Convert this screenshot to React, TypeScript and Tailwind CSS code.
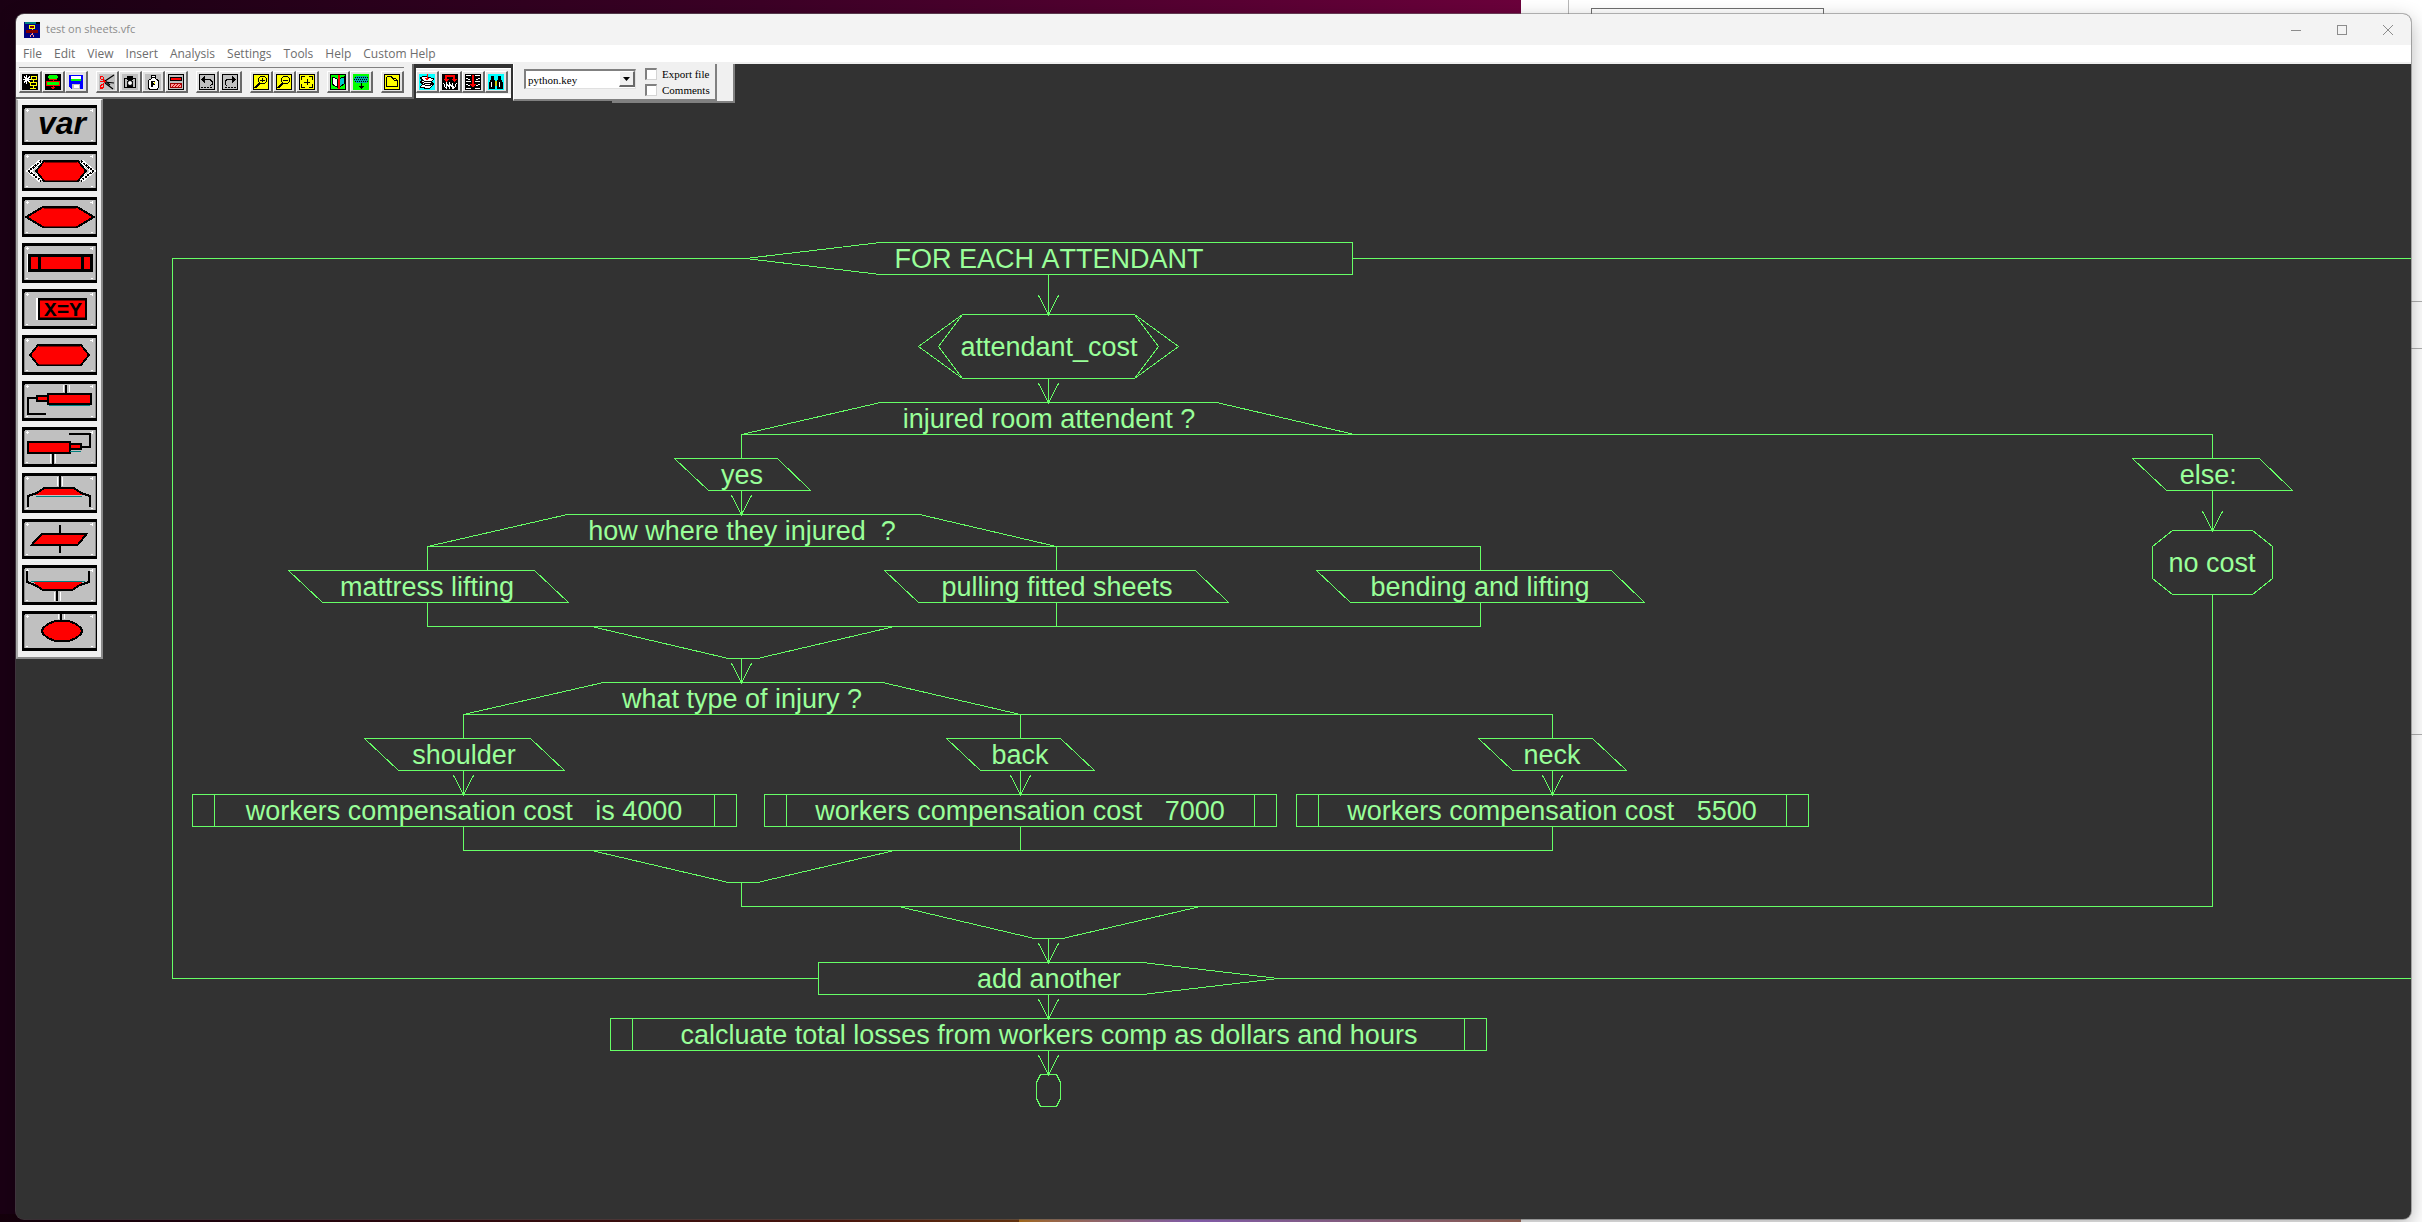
import type { ReactNode } from "react";

/* ---------- toolbar icons (16 x 16 pixel art) ---------- */

function Icon({ bg, children }: { bg: string; children: ReactNode }) {
  return (
    <svg viewBox="0 0 16 16" className="h-4 w-4" shapeRendering="crispEdges" fill="none" stroke="#000" strokeWidth="1" aria-hidden="true">
      <rect x="0" y="0" width="16" height="16" fill={bg} stroke="none" />
      {children}
    </svg>
  );
}

const magnifier = (
  <>
    <rect x="0.5" y="0.5" width="15" height="15" />
    <path d="M7.5 2.5h4l2 2v3l-2 2h-4l-2-2v-3z" strokeWidth="1" />
    <path d="M6 9l-4 5M7 9l-4 5" strokeWidth="1.5" />
  </>
);

const icons: Record<string, ReactNode> = {
  "New flowchart": (
    <Icon bg="#000">
      <path d="M4.500 1v9M1 5.500h8M2 2.500l6 6M8 2.500l-6 6" stroke="#fff" />
      <path d="M9 2.500h5v3h-5zM8 8.500h6v3H9zM11.500 5v3M11.500 12v2M8 14.500h6" stroke="#ff0" />
    </Icon>
  ),
  Open: (
    <Icon bg="#000">
      <path d="M4 1h8v1h1v2h-1v1H4V4H3V2h1z" fill="#0f0" stroke="none" />
      <rect x="1.500" y="7.500" width="13" height="4" fill="#0f0" stroke="#f00" />
      <path d="M4 5.500h8M8 5v2M8 11v4M6 13.500h4M7 14.500h2" stroke="#f00" />
    </Icon>
  ),
  Save: (
    <Icon bg="#e6e6e6">
      <path d="M1 1h14v14H3l-2-2z" fill="#00f" stroke="none" />
      <rect x="3" y="2" width="10" height="3" fill="#fff" stroke="none" />
      <rect x="3" y="5" width="10" height="2" fill="#0f0" stroke="none" />
      <rect x="4" y="10" width="8" height="5" fill="#c0c0c0" stroke="none" />
      <rect x="6" y="11" width="5" height="3" fill="#fff" stroke="none" />
    </Icon>
  ),
  Cut: (
    <Icon bg="#c0c0c0">
      <path d="M6 7l9-6M6 8l9 1M6 9l8 6M5 6l6 5" strokeWidth="1.200" shapeRendering="auto" />
      <path d="M1.500 2.500h2l1 1v2h-2l-1-1zM1.500 12.500l1-2h2v2l-1 1.500h-2zM4 5l2 2.500-2 3M1 7.500h5" stroke="#f00" strokeWidth="1.200" />
    </Icon>
  ),
  Copy: (
    <Icon bg="#c0c0c0">
      <path d="M2 4h3V2h6v2h3v10H2z" fill="#000" stroke="none" />
      <rect x="3" y="5" width="2" height="8" fill="#c0c0c0" stroke="none" />
      <rect x="11" y="5" width="2" height="8" fill="#c0c0c0" stroke="none" />
      <path d="M6 4h4v2H6z" fill="#000" stroke="none" />
      <path d="M5 6h1v1H5zM10 6h1v1h-1z" fill="#c0c0c0" stroke="none" />
      <circle cx="8" cy="9" r="2.500" fill="#fff" stroke="#000" shapeRendering="auto" />
    </Icon>
  ),
  Paste: (
    <Icon bg="#c0c0c0">
      <path d="M6.500 1.500h4v3l2.500 2v7.500l-1 1.500H5l-1.500-1.500V6.500l3-2z" fill="#fff" />
      <path d="M6 3.500h5" />
      <path d="M7 7.500h2.500v2.500H7zM7 7v6" strokeWidth="1.200" />
      <path d="M9 8v2" stroke="#ff0" />
    </Icon>
  ),
  Delete: (
    <Icon bg="#000">
      <rect x="1" y="1" width="14" height="14" fill="#c0c0c0" stroke="none" />
      <rect x="2.500" y="3.500" width="11" height="3" fill="#f00" />
      <rect x="2.500" y="9.500" width="11" height="4" fill="#f99" stroke="#900" />
      <path d="M4 13l3-3M7 13l3-3M10 13l3-3" stroke="#c00" />
    </Icon>
  ),
  Undo: (
    <Icon bg="#c0c0c0">
      <rect x="0.500" y="0.500" width="15" height="15" />
      <path d="M3 5.500h8l2 2v3l-2 1" />
      <path d="M6 2v7L2 5.500z" fill="#000" stroke="none" />
      <path d="M2 13.500h11" strokeDasharray="2 1" />
    </Icon>
  ),
  Redo: (
    <Icon bg="#c0c0c0">
      <rect x="0.500" y="0.500" width="15" height="15" />
      <path d="M13 5.500H5l-2 2v3l2 1" />
      <path d="M10 2v7l4-3.500z" fill="#000" stroke="none" />
      <path d="M3 13.500h11" strokeDasharray="2 1" />
    </Icon>
  ),
  "Zoom in": (
    <Icon bg="#ff0">
      {magnifier}
      <path d="M7 6h5M9.500 4v4" />
    </Icon>
  ),
  "Zoom out": (
    <Icon bg="#ff0">
      {magnifier}
      <path d="M7 6h5" />
    </Icon>
  ),
  "Fit to window": (
    <Icon bg="#ff0">
      <rect x="0.500" y="0.500" width="15" height="15" />
      <path d="M2.500 6V2.500H6M10 2.500h3.500V6M13.500 10v3.500H10M6 13.500H2.500V10M8 5v6M5 8h6" />
    </Icon>
  ),
  Compare: (
    <Icon bg="#0f0">
      <rect x="0.500" y="0.500" width="15" height="15" />
      <path d="M2 3l3 1 2 1v8l-2-1-3-2z" fill="#fff" />
      <path d="M14 3l-3 1-2 1v8l2-1 3-2z" fill="#0cc" />
      <path d="M9 1v14" stroke="#f00" strokeWidth="2" />
    </Icon>
  ),
  Filter: (
    <Icon bg="#0f0">
      <path d="M3 2h10l2 2v3l-2 2H3L1 7V4z" fill="#0aa" stroke="none" />
      <path d="M2 3.500h13M2 7.500h13" strokeDasharray="1 1" />
      <path d="M1 5.500h14" strokeDasharray="1 1" />
      <path d="M8 9v6M5.500 12.500h5M6.500 13.500h3" />
    </Icon>
  ),
  Folder: (
    <Icon bg="#ff0">
      <rect x="0.500" y="0.500" width="15" height="15" />
      <path d="M2.500 12.500v-9l1-1h4l1 2h3l2 2v6zM8 4.500l3 2h2" />
    </Icon>
  ),
  Collapse: (
    <Icon bg="#0ff">
      <path d="M1 4l4-2 10 3-3 3 3 2-5 5-9-2 3-3-3-2 3-2z" fill="#fff" />
      <path d="M2 6l6 2 5-1M3 10l6 2 5-2M2 8l6 2 6-1" />
      <path d="M8 0v6M6 4h4M7 5h2" stroke="#f00" />
    </Icon>
  ),
  "Merge down": (
    <Icon bg="#000">
      <path d="M3 1h2v4h2L4 8 1 5h2zM11 1h2v4h2l-3 3-3-3h2zM3 1h10v2H3z" fill="#f00" stroke="none" />
      <path d="M1.500 9l2 5M4.500 15V9l3 5V9l3 5V9l1 6M14.500 9l-2 5" stroke="#fff" />
    </Icon>
  ),
  "Insert down": (
    <Icon bg="#000">
      <path d="M1 1.500h5M10 1.500h5M1 4.500l4 1M15 4.500l-4 1M1 7.500h5M10 7.500h5M1 10.500l4 1M15 10.500l-4 1M1 14.500h5M10 14.500h5" stroke="#fff" />
      <path d="M7 1h2v9h2l-3 4-3-4h2z" fill="#f00" stroke="none" />
    </Icon>
  ),
  Find: (
    <Icon bg="#0ff">
      <path d="M3 2h3v3l1 2v8H1V9l2-4zM10 2h3v3l2 4v6H9V7l1-2z" fill="#000" stroke="none" />
      <path d="M7 7h2v5H7z" fill="#cc0" stroke="none" />
      <path d="M3.500 8v5M11.500 8v5" stroke="#fff" />
    </Icon>
  ),
};

const mainGroups = [
  ["New flowchart", "Open", "Save"],
  ["Cut", "Copy", "Paste", "Delete"],
  ["Undo", "Redo"],
  ["Zoom in", "Zoom out", "Fit to window"],
  ["Compare", "Filter"],
  ["Folder"],
];
const viewGroup = ["Collapse", "Merge down", "Insert down", "Find"];

function ToolButton({ name }: { name: string }) {
  return (
    <button
      type="button"
      aria-label={name}
      className="flex h-[22px] w-[23px] items-center justify-center border-t border-r-2 border-b-2 border-l border-t-white border-r-[#696969] border-b-[#696969] border-l-white bg-[#e3e3e3]"
    >
      {icons[name]}
    </button>
  );
}

/* ---------- shape palette (75 x 40 drawings with a 3px frame) ---------- */

const RED = "#ff0000";
const TEAL = "#008080";

const palette: { name: string; art: ReactNode }[] = [
  {
    name: "Variable",
    art: (
      <text x="40" y="29" textAnchor="middle" fill="#000" stroke="none" className="font-['Liberation_Sans'] text-[32px] font-bold italic">
        var
      </text>
    ),
  },
  {
    name: "Procedure header",
    art: (
      <>
        <path d="M19 10L7 20l12 10M15 20l8-10M15 20l8 10M59 10l12 10-12 10M63 20l-8-10M63 20l-8 10" stroke="#fff" strokeWidth="4" />
        <path d="M19 10L7 20l12 10M59 10l12 10-12 10" strokeWidth="2" strokeDasharray="2 1" />
        <path d="M22 10h34l8 10-8 10H22l-8-10z" fill={RED} />
        <path d="M23 11.500h32M23 29h32" stroke="#800000" strokeWidth="1" />
      </>
    ),
  },
  {
    name: "Decision",
    art: (
      <>
        <path d="M21 10h34l17 10-17 10H21L4 20z" fill={RED} />
        <path d="M22 11.500h32M22 29h32" stroke="#800000" strokeWidth="1" />
      </>
    ),
  },
  {
    name: "Process",
    art: (
      <>
        <path d="M6 29V11" stroke="#fff" />
        <rect x="7.500" y="12.500" width="62" height="15" fill={RED} strokeWidth="3" />
        <path d="M17.500 12v16M60 12v16" strokeWidth="3" />
      </>
    ),
  },
  {
    name: "Assignment",
    art: (
      <>
        <path d="M15.500 31V9" stroke="#fff" strokeWidth="3" />
        <rect x="17" y="10" width="47" height="20" fill={RED} />
        <path d="M18 28.500h45M18 11.500h45" stroke="#800000" strokeWidth="1" />
        <text x="41" y="27" textAnchor="middle" fill="#000" stroke="none" className="font-['Liberation_Mono'] text-[21px] font-bold">
          X=Y
        </text>
      </>
    ),
  },
  {
    name: "Terminal",
    art: (
      <>
        <path d="M16 10h43l8 10-8 10H16L8 20z" fill={RED} />
        <path d="M17 11.500h41M17 29h41" stroke="#800000" strokeWidth="1" />
      </>
    ),
  },
  {
    name: "Loop start",
    art: (
      <>
        <path d="M41.500 4v7M47 4v7" stroke="#fff" strokeWidth="1" />
        <path d="M44 4v8M15 17H6v16H24" strokeWidth="2" />
        <rect x="15" y="15" width="12" height="5" fill={RED} />
        <rect x="25.500" y="12.500" width="43" height="10" fill={RED} />
        <path d="M27 24.500h41" stroke={TEAL} strokeWidth="1" />
      </>
    ),
  },
  {
    name: "Loop end",
    art: (
      <>
        <path d="M28 27v9M33 27v9" stroke="#fff" strokeWidth="1" />
        <path d="M31 26v11M60 20h8V7H47" />
        <rect x="47" y="17" width="12" height="5" fill={RED} />
        <rect x="6" y="15" width="42" height="11" fill={RED} />
        <path d="M48 24.500h11" stroke={TEAL} strokeWidth="1" />
      </>
    ),
  },
  {
    name: "Branch",
    art: (
      <>
        <path d="M35.500 4v9M40.500 4v9" stroke="#fff" strokeWidth="1" />
        <path d="M22 15h30l10 5v2H14v-2z" fill={RED} stroke="none" />
        <path d="M38 3v12M6 34V23l9-3 7-5h30l7 5 9 3v11" />
        <path d="M14 23.500h46" stroke={TEAL} strokeWidth="1" />
      </>
    ),
  },
  {
    name: "Case",
    art: (
      <>
        <path d="M38 6v8M38 26v8" />
        <path d="M20 14.500h45l-9 11H10z" fill={RED} />
      </>
    ),
  },
  {
    name: "Branch end",
    art: (
      <>
        <path d="M32.500 27v9M38 27v9" stroke="#fff" strokeWidth="1" />
        <path d="M11 17h50l-10 7H20z" fill={RED} stroke="none" />
        <path d="M5 6v11l8 3 7 4.500h31l7-4.500 9-3V6M35 25v11" />
        <path d="M9 16.500h54" stroke={TEAL} strokeWidth="1" />
      </>
    ),
  },
  {
    name: "End",
    art: (
      <>
        <path d="M36 3v5M42 3v5" stroke="#fff" strokeWidth="1" />
        <path d="M39 2v8" />
        <path d="M33 10h14l7 3 5 4 1 3-1 3-5 4-7 3H33l-7-3-5-4-1-3 1-3 5-4z" fill={RED} />
      </>
    ),
  },
];

function Palette() {
  return (
    <div className="relative flex w-[87px] flex-col gap-1.5 self-start border-t border-r-2 border-b-2 border-l-2 border-t-white border-r-[#8a8a8a] border-b-[#8a8a8a] border-l-[#a8a8a8] bg-[#f0f0f0] pt-[5px] pb-1.5 pl-1">
      {palette.map((p) => (
        <button key={p.name} type="button" aria-label={p.name} className="h-10 w-[75px] bg-black">
          <svg viewBox="0 0 75 40" className="h-full w-full" shapeRendering="crispEdges" fill="none" stroke="#000" strokeWidth="2" aria-hidden="true">
            <rect x="3" y="3" width="70" height="34" fill="#c0c0c0" stroke="none" />
            <path d="M2.500 37V3.500M73 37V3" stroke="#8a8a8a" strokeWidth="1" />
            <path d="M4 5h3M5 4v3M68 5h3M70 4v3M4 35h2M69 35h2" stroke="#fff" strokeWidth="1" />
            {p.art}
          </svg>
        </button>
      ))}
    </div>
  );
}

/* ---------- flowchart ---------- */

const lines = [
  // outer loop
  "M172 978V258H745M1352 258H6000M172 978H818M1278 978H6000",
  "M745 258L880 242H1352V274H880Z",
  "M818 962H1142L1278 978L1142 994H818Z",
  // attendant_cost
  "M962 314H1134L1158 346L1134 378H962L938 346Z",
  "M962 314L918 346L962 378M1134 314L1178 346L1134 378",
  // injured room attendent ?
  "M741 458V434L880 402H1216L1354 434M741 434H2212V458",
  "M674 458H777L810 490H708Z",
  "M2132 458H2259L2292 490H2166Z",
  // how where they injured ?
  "M427 570V546L567 514H919L1056 546V570M427 546H1480V570",
  "M288 570H534L568 602H322Z",
  "M884 570H1195L1228 602H918Z",
  "M1316 570H1611L1644 602H1350Z",
  "M427 602V626H1480V602M1056 602V626M591 626L728 658H757L894 626M741 658V682",
  // no cost
  "M2172 530H2252L2272 546V578L2252 594H2172L2152 578V546Z",
  "M2212 594V906H741V882",
  // what type of injury ?
  "M463 738V714L603 682H882L1020 714V738M463 714H1552V738",
  "M364 738H530L564 770H398Z",
  "M946 738H1060L1094 770H980Z",
  "M1478 738H1592L1626 770H1512Z",
  "M463 826V850H1552V826M1020 826V850M591 850L728 882H757L894 850",
  // processes
  "M192 794H736V826H192ZM214 794V826M714 794V826",
  "M764 794H1276V826H764ZM786 794V826M1254 794V826",
  "M1296 794H1808V826H1296ZM1318 794V826M1786 794V826",
  "M898 906L1034 938H1062L1200 906",
  "M610 1018H1486V1050H610ZM632 1018V1050M1464 1018V1050",
  "M1040 1074H1056L1060 1082V1098L1056 1106H1040L1036 1098V1082Z",
];

// [x, start y, tip y]
const arrows: [number, number, number][] = [
  [1048, 274, 314],
  [1048, 378, 402],
  [741, 490, 514],
  [741, 658, 682],
  [463, 770, 794],
  [1020, 770, 794],
  [1552, 770, 794],
  [2212, 490, 530],
  [1048, 938, 962],
  [1048, 994, 1018],
  [1048, 1050, 1074],
];

// [centre x, baseline y, label]
const labels: [number, number, string][] = [
  [1049, 268, "FOR EACH ATTENDANT"],
  [1049, 356, "attendant_cost"],
  [1049, 428, "injured room attendent ?"],
  [742, 484, "yes"],
  [2212, 484, "else: "],
  [742, 540, "how where they injured  ?"],
  [427, 596, "mattress lifting"],
  [1057, 596, "pulling fitted sheets"],
  [1480, 596, "bending and lifting"],
  [2212, 572, "no cost"],
  [742, 708, "what type of injury ?"],
  [464, 764, "shoulder"],
  [1020, 764, "back"],
  [1552, 764, "neck"],
  [464, 820, "workers compensation cost   is 4000"],
  [1020, 820, "workers compensation cost   7000"],
  [1552, 820, "workers compensation cost   5500"],
  [1049, 988, "add another"],
  [1049, 1044, "calcluate total losses from workers comp as dollars and hours"],
];

function Flowchart() {
  return (
    <svg className="absolute inset-0 h-full w-full" role="img" aria-label="Flowchart">
      <g transform="translate(-16 -64)">
        <g transform="translate(0.5 0.5)" fill="none" stroke="#66ff66" strokeWidth="1" shapeRendering="crispEdges">
          {lines.map((d) => (
            <path key={d} d={d} />
          ))}
          {arrows.map(([x, y, tip]) => (
            <path key={`${x}-${y}`} d={`M${x} ${y}V${tip}M${x - 10} ${tip - 19}L${x} ${tip}L${x + 10} ${tip - 19}`} />
          ))}
        </g>
        <g fill="#99ff99" textAnchor="middle" className="font-['Liberation_Sans',sans-serif] text-[27px] [font-kerning:none]">
          {labels.map(([x, y, t]) => (
            <text key={`${x}-${y}`} x={x} y={y} className="whitespace-pre">
              {t}
            </text>
          ))}
        </g>
      </g>
    </svg>
  );
}

/* ---------- window ---------- */

const menus = ["File", "Edit", "View", "Insert", "Analysis", "Settings", "Tools", "Help", "Custom Help"];

function TitleBar() {
  return (
    <header className="flex h-[31px] shrink-0 items-center bg-[#f3f3f3] pl-2">
      <svg viewBox="0 0 16 16" className="h-4 w-4" shapeRendering="crispEdges" fill="none" aria-hidden="true">
        <rect width="16" height="16" fill="#000080" />
        <rect x="1" width="11" height="2" fill="#008080" />
        <rect x="12" width="4" height="2" fill="#000" />
        <path d="M5.500 3.500h5v3h-5z" fill="#800000" stroke="#ff0" />
        <rect x="2" y="8" width="12" height="3" fill="#800000" />
        <path d="M8 7v1M8 11v1M7 12.500h2M6.500 13v2M9.500 13v2" stroke="#ff9090" />
      </svg>
      <h1 className="ml-1.5 flex-1 font-['Open_Sans',sans-serif] text-[11px] text-[#8c8c8c]">test on sheets.vfc</h1>
      <button type="button" aria-label="Minimize" className="flex h-full w-[46px] items-center justify-center">
        <svg viewBox="0 0 10 10" className="h-2.5 w-2.5" stroke="#8c8c8c" fill="none">
          <path d="M0 5.500h10" />
        </svg>
      </button>
      <button type="button" aria-label="Maximize" className="flex h-full w-[46px] items-center justify-center">
        <svg viewBox="0 0 10 10" className="h-2.5 w-2.5" stroke="#8c8c8c" fill="none">
          <rect x="0.500" y="0.500" width="9" height="9" />
        </svg>
      </button>
      <button type="button" aria-label="Close" className="flex h-full w-[46px] items-center justify-center">
        <svg viewBox="0 0 10 10" className="h-2.5 w-2.5" stroke="#8c8c8c" fill="none">
          <path d="M0 0l10 10M10 0L0 10" />
        </svg>
      </button>
    </header>
  );
}

function Check({ label }: { label: string }) {
  return (
    <label className="flex h-4 items-center gap-[5px] leading-4">
      <input
        type="checkbox"
        className="h-3 w-3 appearance-none border-t-2 border-r border-b border-l-2 border-t-[#808080] border-r-[#d4d4d4] border-b-[#d4d4d4] border-l-[#808080] bg-white"
      />
      {label}
    </label>
  );
}

export default function App() {
  return (
    <div className="relative flex min-h-screen flex-col overflow-hidden bg-white pt-[14px] pr-[11px] pb-[3px] pl-4">
      {/* desktop behind the window */}
      <div className="absolute inset-0 flex" aria-hidden="true">
        <div className="flex w-[62.8%] flex-col bg-[#1a0014]">
          <div className="h-8 bg-linear-to-r from-[#1a0013] via-[#3c0026] to-[#6b003b]" />
          <div className="flex-1" />
          <div className="h-2 bg-linear-to-r from-[#15000c] via-[#5a1a10] via-55% to-[#7a3e12] to-67%">
            <div className="ml-[67%] h-full bg-linear-to-r from-[#c8801e] via-[#a070d0] via-35% to-[#a87060]" />
          </div>
        </div>
        <div className="relative flex-1 bg-white">
          <div className="absolute top-0 left-[47px] h-4 w-px bg-[#b8b8b8]" />
          <div className="absolute top-2 left-[70px] h-8 w-[233px] border border-[#6e6e6e]" />
          <div className="absolute top-[301px] right-0 h-px w-8 bg-[#b0b0b0]" />
          <div className="absolute top-[348px] right-0 h-px w-8 bg-[#b0b0b0]" />
          <div className="absolute top-[734px] right-0 h-px w-8 bg-[#b0b0b0]" />
        </div>
      </div>

      <main className="relative flex flex-1 flex-col overflow-hidden rounded-lg bg-[#323232] shadow-[0_6px_20px_rgba(0,0,0,0.3),0_0_0_1px_rgba(120,120,120,0.5)]">
        <TitleBar />
        <nav className="flex h-[19px] shrink-0 items-center border-b-2 border-[#f0f0f0] bg-white pl-px font-['Open_Sans',sans-serif] text-[12px] leading-4 text-[#6d6d6d]">
          {menus.map((m) => (
            <button key={m} type="button" className="px-1.5 whitespace-nowrap">
              {m}
            </button>
          ))}
        </nav>

        <section className="relative flex flex-1 flex-col overflow-hidden">
          <Flowchart />

          <div className="relative flex h-[35px] items-start gap-0.5">
            <div className="flex h-full items-start border-r-2 border-b-2 border-r-[#696969] border-b-[#696969] bg-[#f0f0f0] pr-2 pl-[3px]">
              <div className="mt-[3px] flex gap-2 border-t border-[#808080] pt-[3px]">
                {mainGroups.map((g) => (
                  <div key={g[0]} className="flex">
                    {g.map((n) => (
                      <ToolButton key={n} name={n} />
                    ))}
                  </div>
                ))}
              </div>
            </div>

            <div className="mt-1 flex h-[30px] items-start border-t border-b-4 border-white bg-[#f0f0f0] pt-0.5 pr-[3px]">
              {viewGroup.map((n) => (
                <ToolButton key={n} name={n} />
              ))}
            </div>

            <div className="relative">
              <div className="absolute top-0 left-[99px] h-[39px] w-[123px] border-r-2 border-b-2 border-[#808080] bg-[#f0f0f0]" />
              <div className="relative flex h-[37px] w-[204px] border-r-2 border-b-2 border-l border-r-[#808080] border-b-[#808080] border-l-white bg-[#f0f0f0] pt-0.5 pl-2.5 font-['Liberation_Serif',serif] text-[11px] text-black">
                <div className="relative mt-[3px] h-5 w-28">
                  <select
                    aria-label="Language key"
                    className="h-full w-full appearance-none border-t-2 border-r border-b border-l-2 border-t-[#808080] border-r-[#e0e0e0] border-b-[#e0e0e0] border-l-[#808080] bg-white pl-0.5 leading-4"
                  >
                    <option>python.key</option>
                  </select>
                  <span className="pointer-events-none absolute top-0.5 right-px flex h-4 w-4 items-center justify-center border-t border-r-2 border-b-2 border-l border-t-white border-r-[#696969] border-b-[#696969] border-l-white bg-[#f0f0f0]">
                    <svg viewBox="0 0 7 4" className="h-1 w-[7px]" aria-hidden="true">
                      <path d="M0 0h7L3.500 4z" />
                    </svg>
                  </span>
                </div>
                <div className="ml-[9px] flex flex-col">
                  <Check label="Export file" />
                  <Check label="Comments" />
                </div>
              </div>
            </div>
          </div>

          <Palette />
        </section>
      </main>
    </div>
  );
}
